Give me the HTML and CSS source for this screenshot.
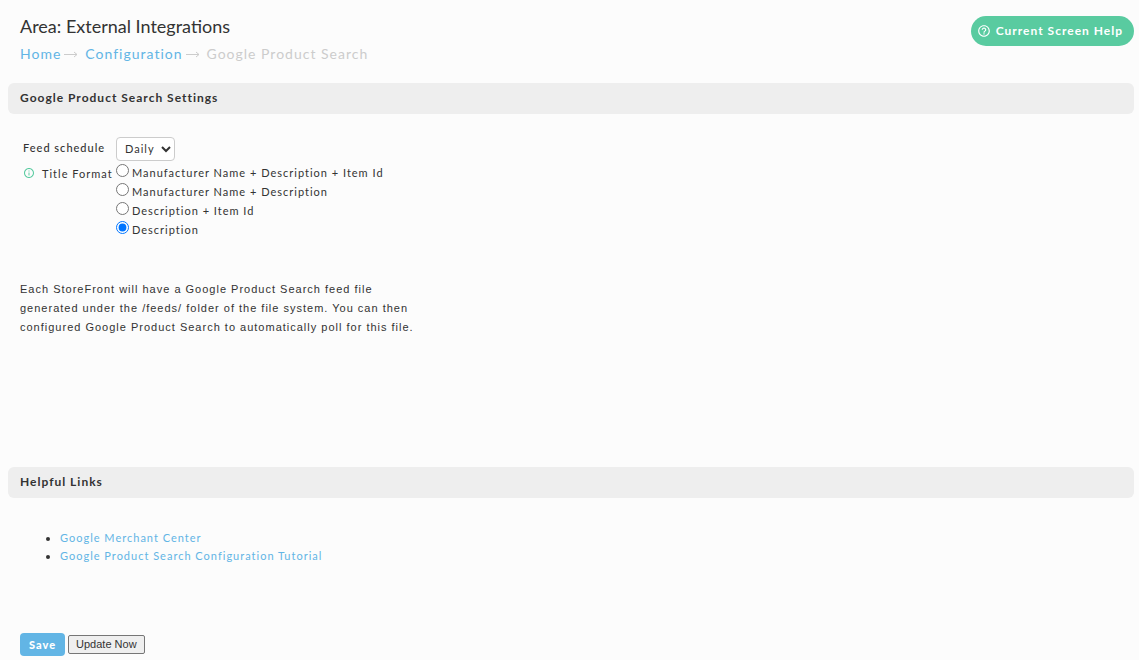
FILE: index.html
```html
<!DOCTYPE html>
<html lang="en">
<head>
<meta charset="utf-8">
<title>Google Product Search</title>
<link rel="stylesheet" href="styles.css">
</head>
<body>
<header class="page-header">
  <div class="heading">
    <h1 class="title">Area: External Integrations</h1>
    <nav class="breadcrumb" aria-label="Breadcrumb">
      <a href="#">Home</a>
      <svg class="arrow" viewBox="0 0 14 8" aria-hidden="true"><path d="M0 4.500h13M10 2L13 4.500l-3 2.500"/></svg>
      <a href="#">Configuration</a>
      <svg class="arrow" viewBox="0 0 14 8" aria-hidden="true"><path d="M0 4.500h13M10 2L13 4.500l-3 2.500"/></svg>
      <span>Google Product Search</span>
    </nav>
  </div>
  <button class="help" type="button">
    <svg class="help-icon" viewBox="0 0 24 24" aria-hidden="true"><path d="M11 18h2v-2h-2v2zm1-16C6.480 2 2 6.480 2 12s4.480 10 10 10 10-4.480 10-10S17.520 2 12 2zm0 18c-4.410 0-8-3.590-8-8s3.590-8 8-8 8 3.590 8 8-3.590 8-8 8zm0-14c-2.210 0-4 1.790-4 4h2c0-1.100.9-2 2-2s2 .9 2 2c0 2-3 1.750-3 5h2c0-2.250 3-2.500 3-5 0-2.210-1.790-4-4-4z"/></svg>
    <span>Current Screen Help</span>
  </button>
</header>
<main>
  <form>
    <h2 class="section-bar">Google Product Search Settings</h2>
    <div class="settings">
      <label class="feed-label" for="schedule">Feed schedule</label>
      <select id="schedule" class="schedule"><option>Daily</option><option>Weekly</option></select>
      <div class="format-label" id="format-label">
        <svg class="info-icon" viewBox="0 0 24 24" aria-hidden="true"><path d="M11 7h2v2h-2zm0 4h2v6h-2zm1-9C6.480 2 2 6.480 2 12s4.480 10 10 10 10-4.480 10-10S17.520 2 12 2zm0 18c-4.410 0-8-3.590-8-8s3.590-8 8-8 8 3.590 8 8-3.590 8-8 8z"/></svg>
        <span>Title Format</span>
      </div>
      <div class="options" role="radiogroup" aria-labelledby="format-label">
        <label class="option"><input type="radio" name="format"><span>Manufacturer Name + Description + Item Id</span></label>
        <label class="option"><input type="radio" name="format"><span>Manufacturer Name + Description</span></label>
        <label class="option"><input type="radio" name="format"><span>Description + Item Id</span></label>
        <label class="option"><input type="radio" name="format" checked><span>Description</span></label>
      </div>
    </div>
    <p class="note">Each StoreFront will have a Google Product Search feed file generated under the /feeds/ folder of the file system. You can then configured Google Product Search to automatically poll for this file.</p>
    <h2 class="section-bar">Helpful Links</h2>
    <ul class="links">
      <li><a href="#">Google Merchant Center</a></li>
      <li><a href="#">Google Product Search Configuration Tutorial</a></li>
    </ul>
    <div class="actions">
      <button class="save" type="button">Save</button>
      <button class="update" type="button">Update Now</button>
    </div>
  </form>
</main>
</body>
</html>
```
FILE: styles.css
```css
* { box-sizing: border-box; }
body {
  margin: 0;
  padding: 16px 5px 4px 8px;
  background: #fcfcfc;
  color: #333;
  font: 11px/18px Lato, sans-serif;
  letter-spacing: 1px;
}
a { color: #62b5e5; text-decoration: none; }
.page-header {
  display: flex;
  justify-content: space-between;
  align-items: flex-start;
  padding-left: 12px;
}
.title {
  margin: 0;
  font-size: 18px;
  line-height: 20px;
  font-weight: 400;
  letter-spacing: 0;
}
.breadcrumb {
  display: flex;
  align-items: center;
  margin: 8px 0 19px;
  font-size: 14px;
  line-height: 20px;
  color: #ccc;
}
.arrow {
  width: 14px;
  height: 8px;
  margin: 0 7px 0 3px;
  fill: none;
  stroke: #ccc;
}
.help {
  display: flex;
  align-items: center;
  gap: 5px;
  height: 30px;
  padding: 0 11px 0 6px;
  border: 0;
  border-radius: 15px;
  background: #59cba0;
  color: #fff;
  font: 700 12px/18px Lato, sans-serif;
  letter-spacing: 1px;
}
.help-icon { flex: none; width: 14px; height: 14px; fill: #fff; }
.section-bar {
  margin: 0;
  padding: 6px 12px 7px;
  border-radius: 6px;
  background: #eee;
  font-size: 12px;
  line-height: 18px;
  font-weight: 700;
  letter-spacing: 1px;
}
.settings {
  display: grid;
  grid-template-columns: 93px 1fr;
  padding: 23px 15px 0;
}
.feed-label { padding-top: 2px; font-weight: 500; }
.schedule {
  width: 59px;
  height: 24px;
  padding: 0 0 1px 4px;
  border: 1px solid #ccc;
  border-radius: 4px;
  background: #fff;
  color: #333;
  font: 11px/18px Lato, sans-serif;
  letter-spacing: 1px;
}
.format-label {
  display: flex;
  align-items: flex-start;
  gap: 7px;
  padding-top: 4px;
  white-space: nowrap;
}
.info-icon { flex: none; width: 12px; height: 12px; margin-top: 2px; fill: #59cba0; }
.options {
  display: grid;
  gap: 1px;
  padding: 3px 0 1px;
}
.option { display: flex; align-items: flex-start; gap: 3px; }
.option input { width: 13px; height: 13px; margin: 0; }
.note {
  max-width: 422px;
  margin: 0;
  padding: 40px 12px 130px;
  font: 11px/19px "Liberation Sans", Arial, sans-serif;
  letter-spacing: 1px;
}
.links { margin: 0; padding: 31px 0 68px 52px; }
.actions { display: flex; align-items: center; gap: 3px; padding-left: 12px; }
.save {
  height: 23px;
  padding: 0 9px;
  border: 0;
  border-radius: 4px;
  background: #62b5e5;
  color: #fff;
  font: 900 11px/18px Lato, sans-serif;
  letter-spacing: 1px;
}
.update {
  height: 19px;
  padding: 0 7px 1px;
  border: 1px solid #767676;
  border-radius: 2px;
  background: #efefef;
  color: #333;
  font: 11px/14px "Liberation Sans", Arial, sans-serif;
}
```
